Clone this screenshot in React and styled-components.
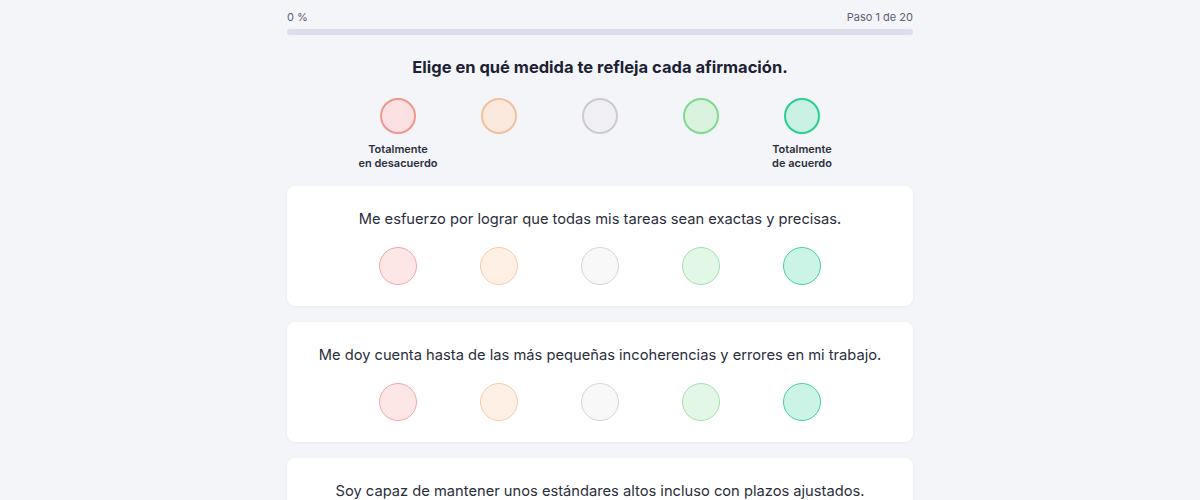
import React from 'react';
import styled, { createGlobalStyle } from 'styled-components';

const GlobalStyle = createGlobalStyle`
  body {
    margin: 0;
    background: #f4f5f9;
    font-family: Inter, "Noto Sans", sans-serif;
  }
`;

const Page = styled.main`
  width: 626px;
  margin: 0 auto;
  padding-top: 10px;
`;

const ProgressHead = styled.div`
  display: flex;
  justify-content: space-between;
  font-size: 11px;
  line-height: 14px;
  color: #5a5f72;
`;

const Track = styled.div`
  height: 6px;
  margin-top: 5px;
  border-radius: 3px;
  background: #dcdde8;
`;

const Heading = styled.h1`
  margin: 22px 0 0;
  font-size: 16.5px;
  line-height: 20px;
  font-weight: 700;
  color: #1c2133;
  text-align: center;
`;

const Scale = styled.div`
  display: grid;
  grid-template-columns: repeat(5, 101px);
  justify-content: center;
  margin-top: ${p => p.$top || 0}px;
`;

const Option = styled.div`
  display: flex;
  flex-direction: column;
  align-items: center;
`;

const palette = {
  legend: [
    ['#f1958e', '#fbe1e1'],
    ['#f5bf9b', '#fce9de'],
    ['#cbcbd0', '#f0f0f4'],
    ['#82d892', '#d9f3de'],
    ['#2bcd93', '#c9f1e4'],
  ],
  card: [
    ['#efa7a7', '#fde6e6'],
    ['#f7cba8', '#fff0e5'],
    ['#d6d6d8', '#f8f8f8'],
    ['#a3e1b0', '#e2f7e6'],
    ['#44cf9f', '#cbf4e7'],
  ],
};

const Dot = styled.button`
  box-sizing: border-box;
  width: ${p => p.$size}px;
  height: ${p => p.$size}px;
  padding: 0;
  border-radius: 50%;
  border: ${p => p.$border}px solid ${p => p.$stroke};
  background: ${p => p.$fill};
  cursor: pointer;
`;

const ScaleLabel = styled.span`
  margin-top: 8px;
  font-size: 11px;
  line-height: 14px;
  font-weight: 600;
  color: #2b2f3d;
  text-align: center;
  white-space: nowrap;
`;

const Card = styled.section`
  box-sizing: border-box;
  height: 120px;
  margin-top: 16px;
  padding-top: 23px;
  background: #fff;
  border-radius: 8px;
  box-shadow: 0 1px 3px rgba(20, 25, 50, 0.06);
`;

const Statement = styled.p`
  margin: 0;
  font-size: 14.7px;
  line-height: 20px;
  color: #2a2e3b;
  text-align: center;
`;

const statements = [
  'Me esfuerzo por lograr que todas mis tareas sean exactas y precisas.',
  'Me doy cuenta hasta de las más pequeñas incoherencias y errores en mi trabajo.',
  'Soy capaz de mantener unos estándares altos incluso con plazos ajustados.',
];

const legendText = [
  ['Totalmente', 'en desacuerdo'],
  null,
  null,
  null,
  ['Totalmente', 'de acuerdo'],
];

export default function App() {
  return (
    <>
      <GlobalStyle />
      <Page>
        <ProgressHead>
          <span>0 %</span>
          <span>Paso 1 de 20</span>
        </ProgressHead>
        <Track />
        <Heading>Elige en qué medida te refleja cada afirmación.</Heading>
        <Scale $top={21}>
          {palette.legend.map(([stroke, fill], i) => (
            <Option key={i}>
              <Dot $size={36} $border={2} $stroke={stroke} $fill={fill} />
              {legendText[i] && (
                <ScaleLabel>
                  {legendText[i][0]}
                  <br />
                  {legendText[i][1]}
                </ScaleLabel>
              )}
            </Option>
          ))}
        </Scale>
        {statements.map((text, n) => (
          <Card key={n}>
            <Statement>{text}</Statement>
            <Scale $top={18}>
              {palette.card.map(([stroke, fill], i) => (
                <Option key={i}>
                  <Dot $size={38} $border={1} $stroke={stroke} $fill={fill} />
                </Option>
              ))}
            </Scale>
          </Card>
        ))}
      </Page>
    </>
  );
}
